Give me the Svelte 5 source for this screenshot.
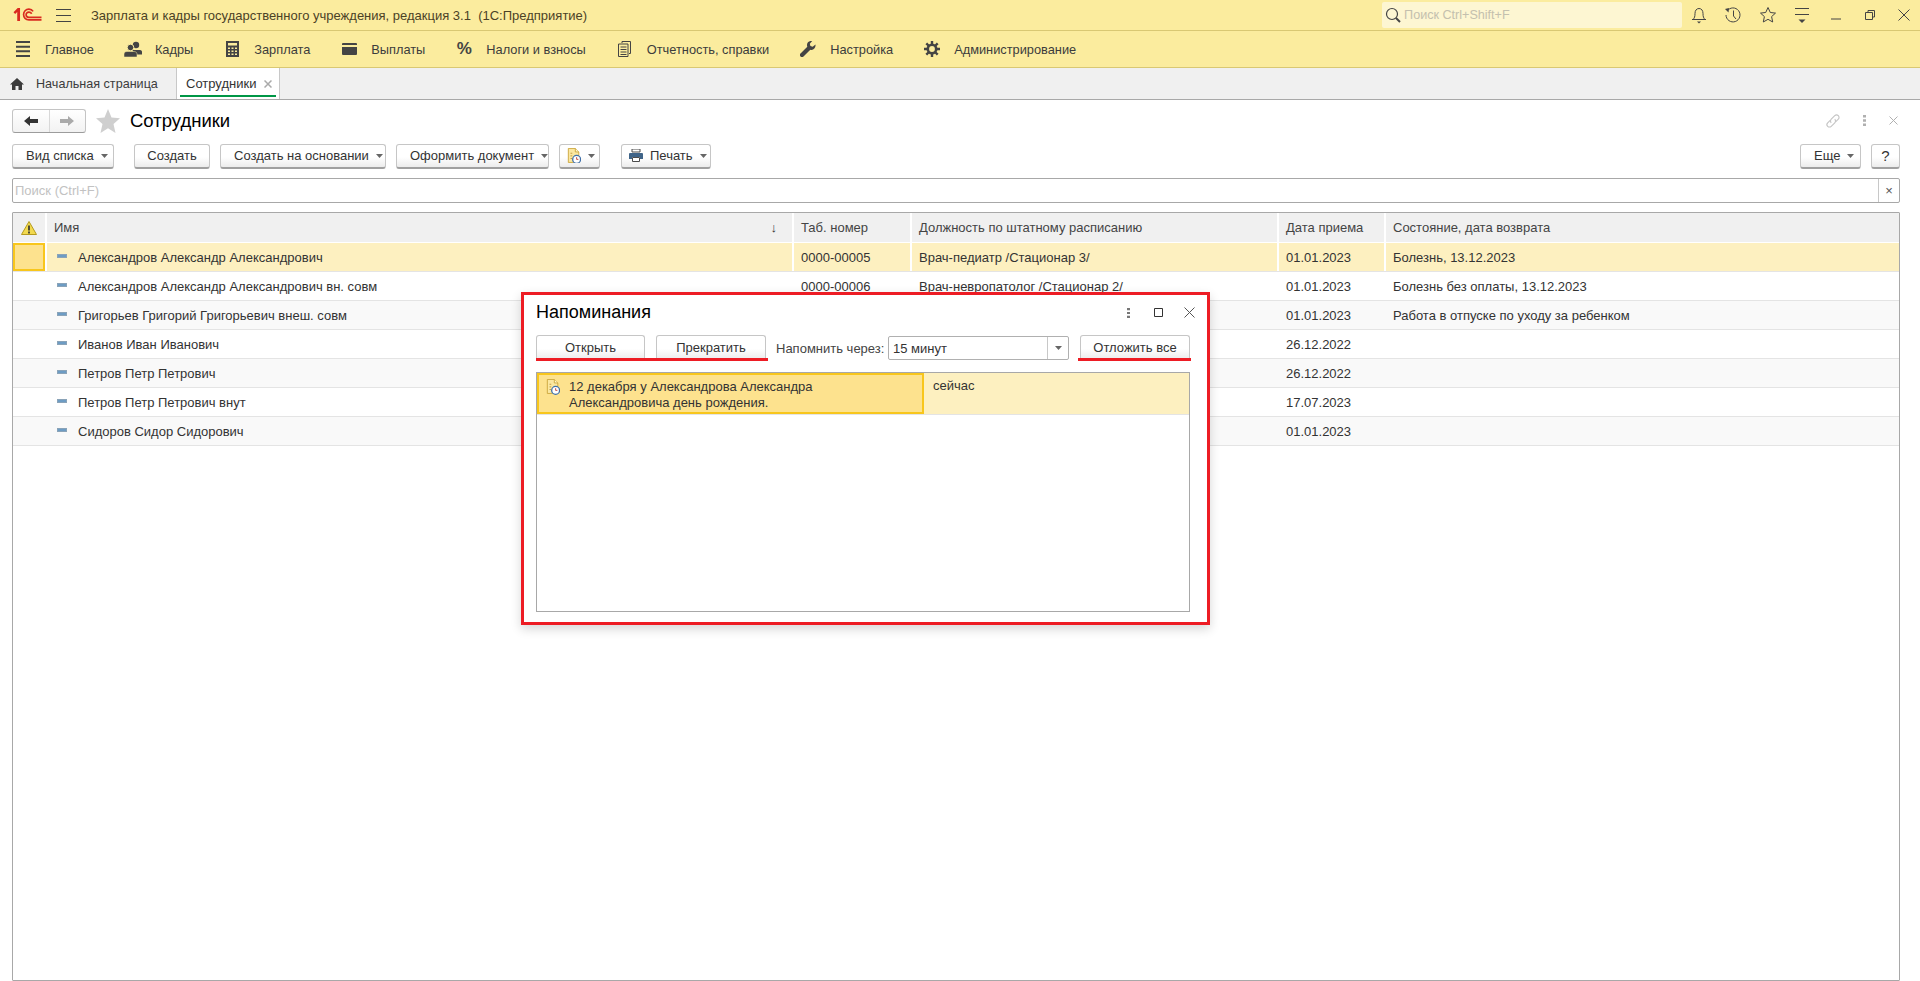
<script>
  const sections = [
    { label: 'Главное', icon: 'lines' },
    { label: 'Кадры', icon: 'people' },
    { label: 'Зарплата', icon: 'calc' },
    { label: 'Выплаты', icon: 'wallet' },
    { label: 'Налоги и взносы', icon: 'percent' },
    { label: 'Отчетность, справки', icon: 'docs' },
    { label: 'Настройка', icon: 'wrench' },
    { label: 'Администрирование', icon: 'gear' }
  ];

  const rows = [
    { name: 'Александров Александр Александрович', tab: '0000-00005', post: 'Врач-педиатр /Стационар 3/', date: '01.01.2023', state: 'Болезнь, 13.12.2023' },
    { name: 'Александров Александр Александрович вн. совм', tab: '0000-00006', post: 'Врач-невропатолог /Стационар 2/', date: '01.01.2023', state: 'Болезнь без оплаты, 13.12.2023' },
    { name: 'Григорьев Григорий Григорьевич внеш. совм', tab: '', post: '', date: '01.01.2023', state: 'Работа в отпуске по уходу за ребенком' },
    { name: 'Иванов Иван Иванович', tab: '', post: '', date: '26.12.2022', state: '' },
    { name: 'Петров Петр Петрович', tab: '', post: '', date: '26.12.2022', state: '' },
    { name: 'Петров Петр Петрович внут', tab: '', post: '', date: '17.07.2023', state: '' },
    { name: 'Сидоров Сидор Сидорович', tab: '', post: '', date: '01.01.2023', state: '' }
  ];
</script>

{#snippet caret()}
  <svg class="caret" viewBox="0 0 7 4" width="7" height="4"><path d="M0 0h7L3.500 4z" fill="#666" /></svg>
{/snippet}

{#snippet docClock(size)}
  <svg viewBox="0 0 16 18" width={size} height={size * 18 / 16}>
    <path d="M1.500.5h8l4 4v12h-12z" fill="#fbe7a0" stroke="#c9a437" />
    <path d="M9.500.5v4h4" fill="#fff6d0" stroke="#c9a437" />
    <path d="M4 6h2M4 9h2M4 12h2" stroke="#b8923a" />
    <circle cx="11" cy="13" r="4.500" fill="#fff" stroke="#3f6fa8" stroke-width="1.500" />
    <path d="M11 10.500V13h2" stroke="#c0392b" fill="none" />
  </svg>
{/snippet}

<div class="app">
  <header class="titlebar">
    <svg class="logo" viewBox="0 0 30 15" width="29" height="14">
      <path d="M0 4.500 4.500 0H7v14H4V4.200L1.800 6.400z" fill="#d92b20" />
      <path d="M21 3.600C20 2 18.400 1.300 16.500 1.300c-3.400 0-5.700 2.500-5.700 5.700s2.300 5.700 5.700 5.700H30" fill="none" stroke="#d92b20" stroke-width="1.800" />
      <path d="M19.500 6.200c-.6-1-1.700-1.700-3-1.700-1.700 0-3 1.200-3 2.800s1.300 2.700 3 2.700H30" fill="none" stroke="#d92b20" stroke-width="1.800" />
    </svg>
    <svg class="burger" viewBox="0 0 15 13" width="15" height="13"><path d="M0 .5h15M0 6.500h15M0 12.500h15" stroke="#444" /></svg>
    <span class="app-title">Зарплата и кадры государственного учреждения, редакция 3.1&nbsp; (1С:Предприятие)</span>
    <div class="global-search">
      <svg viewBox="0 0 16 16" width="16" height="16"><circle cx="7" cy="7" r="5.500" fill="none" stroke="#444" stroke-width="1.200" /><path d="M11 11l4 4" stroke="#444" stroke-width="2" /></svg>
      <span>Поиск Ctrl+Shift+F</span>
    </div>
    <div class="win-icons">
      <svg viewBox="0 0 16 18" width="16" height="18"><path d="M2 13.500c1.500-1.500 2-3 2-6 0-3 1.500-5 4-5s4 2 4 5c0 3 .5 4.500 2 6z M1 13.500h14" fill="none" stroke="#444" /><path d="M6 15.500h4L8 17.500z" fill="#444" /></svg>
      <svg viewBox="0 0 18 18" width="18" height="18"><path d="M3.200 5A7 7 0 1 1 2 9" fill="none" stroke="#444" /><path d="M1 3l4-1-.5 4.500z" fill="#444" /><path d="M9.500 4.500V10l2.500 3" fill="none" stroke="#444" /></svg>
      <svg viewBox="0 0 18 18" width="18" height="18"><path d="M9 1.500l2.300 5 5.200.6-3.900 3.500 1.100 5.400L9 13.300l-4.700 2.700 1.100-5.400L1.500 7.100l5.200-.6z" fill="none" stroke="#444" /></svg>
      <svg viewBox="0 0 16 16" width="16" height="16"><path d="M1 1.500h14M1 7.500h14" stroke="#444" /><path d="M4.500 12.500h7L8 16z" fill="#444" /></svg>
      <svg viewBox="0 0 10 10" width="10" height="10"><path d="M0 9h10" stroke="#444" stroke-width="1" /></svg>
      <svg viewBox="0 0 10 10" width="10" height="10"><path d="M3 2.500V.5h6.500v6.500H7.500M.5 2.500h7v7h-7z" fill="none" stroke="#444" /></svg>
      <svg viewBox="0 0 12 12" width="12" height="12"><path d="M.5.500l11 11M11.500.5l-11 11" stroke="#444" /></svg>
    </div>
  </header>

  <nav class="sections">
    {#each sections as s}
      <div class="section">
        <span class="section-icon">
          {#if s.icon === 'lines'}
            <svg viewBox="0 0 14 16" width="14" height="16"><path d="M0 1h14M0 5.700h14M0 10.300h14M0 15h14" stroke="#444" stroke-width="2" /></svg>
          {:else if s.icon === 'people'}
            <svg viewBox="0 0 18 16" width="18" height="16"><circle cx="12" cy="4" r="3.200" fill="#444" /><path d="M8 9h8c1.500 0 2 1 2 2v2.500h-6z" fill="#444" /><circle cx="6.500" cy="6.500" r="3.300" fill="#444" stroke="#fbec9e" /><path d="M0 16v-2.500c0-2 1-3 3-3h7c2 0 3 1 3 3V16z" fill="#444" stroke="#fbec9e" stroke-width=".5" /></svg>
          {:else if s.icon === 'calc'}
            <svg viewBox="0 0 13 16" width="13" height="16"><path fill-rule="evenodd" d="M0 0h13v16H0zM2 2v2.500h9V2zM2 6.500V8h2V6.500zM5.500 6.500V8h2V6.500zM9 6.500V8h2V6.500zM2 9.500V11h2V9.500zM5.500 9.500V11h2V9.500zM9 9.500V11h2V9.500zM2 12.500V14h2v-1.500zM5.500 12.500V14h2v-1.500zM9 12.500V14h2v-1.500z" fill="#444" /></svg>
          {:else if s.icon === 'wallet'}
            <svg viewBox="0 0 15 12" width="15" height="12"><path d="M1 0h13a1 1 0 0 1 1 1v1H0V1a1 1 0 0 1 1-1zM0 4h15v7a1 1 0 0 1-1 1H1a1 1 0 0 1-1-1z" fill="#444" /></svg>
          {:else if s.icon === 'percent'}
            <span class="pct">%</span>
          {:else if s.icon === 'docs'}
            <svg viewBox="0 0 13 16" width="13" height="16"><path d="M4 2V.5h8.500v12H11M.5 3h9.500v12.500H.5z" fill="none" stroke="#444" /><path d="M2.500 6h6M2.500 8.500h6M2.500 11h6M2.500 13.500h6" stroke="#444" /></svg>
          {:else if s.icon === 'wrench'}
            <svg viewBox="0 0 16 16" width="16" height="16"><path d="M15.500 3.500l-2.800 2.300-2.300-.7-.6-2.300L12.200 0C9.500-.5 7 1.300 7 4c0 .7.100 1.200.3 1.700L.5 12.500a2 2 0 0 0 3 3l6.800-6.800c2.800 1 5.700-1.500 5.200-5.200z" fill="#444" /></svg>
          {:else}
            <svg viewBox="0 0 16 16" width="16" height="16"><circle cx="8" cy="8" r="4.200" fill="none" stroke="#444" stroke-width="2.600" /><path d="M8 0v3M8 13v3M0 8h3M13 8h3M2.300 2.300l2.200 2.200M11.500 11.500l2.200 2.200M13.700 2.300l-2.200 2.200M4.500 11.500l-2.200 2.200" stroke="#444" stroke-width="2.400" /></svg>
          {/if}
        </span>
        <span>{s.label}</span>
      </div>
    {/each}
  </nav>

  <div class="tabs">
    <div class="tab home">
      <svg viewBox="0 0 14 12" width="14" height="12"><path d="M7 0l7 6.500h-2V12H8.500V8h-3v4H2V6.500H0z" fill="#3c3c3c" /></svg>
      <span>Начальная страница</span>
    </div>
    <div class="tab active">
      <span>Сотрудники</span>
      <svg viewBox="0 0 8 8" width="8" height="8"><path d="M.5.500l7 7M7.500.5l-7 7" stroke="#aaa" stroke-width="1.500" /></svg>
    </div>
  </div>

  <main class="page">
    <div class="form-head">
      <div class="nav-group">
        <span class="nav-btn">
          <svg viewBox="0 0 14 10" width="14" height="10"><path d="M0 5l6-5v3h8v4H6v3z" fill="#333" /></svg>
        </span>
        <span class="nav-btn">
          <svg viewBox="0 0 14 10" width="14" height="10"><path d="M14 5L8 0v3H0v4h8v3z" fill="#aaa" /></svg>
        </span>
      </div>
      <svg class="fav" viewBox="0 0 24 24" width="24" height="24"><path d="M12 0l3.500 8.500 8.500.7-6.500 5.800 2 9L12 19.200 4.500 24l2-9L0 9.200l8.500-.7z" fill="#cfcfcf" /></svg>
      <h1>Сотрудники</h1>
      <div class="head-icons">
        <svg viewBox="0 0 16 16" width="16" height="16">
          <g transform="rotate(-45 8 8)" fill="none" stroke="#c4c4c4" stroke-width="1.100">
            <path d="M6.500 5.500H3a2.500 2.500 0 0 0 0 5h5a2.500 2.500 0 0 0 2.500-2.500" />
            <path d="M5.500 8A2.500 2.500 0 0 1 8 5.500h5a2.500 2.500 0 0 1 0 5H9.500" />
          </g>
        </svg>
        <svg viewBox="0 0 3 11" width="3" height="11"><path d="M0 0h3v2.500H0zM0 4.200h3v2.500H0zM0 8.500h3V11H0z" fill="#b0b0b0" /></svg>
        <svg viewBox="0 0 9 9" width="9" height="9"><path d="M.5.500l8 8M8.500.5l-8 8" stroke="#b0b0b0" /></svg>
      </div>
    </div>

    <div class="toolbar">
      <button class="btn drop w-view">Вид списка {@render caret()}</button>
      <button class="btn w-create">Создать</button>
      <button class="btn drop w-base">Создать на основании {@render caret()}</button>
      <button class="btn drop w-doc">Оформить документ {@render caret()}</button>
      <button class="btn drop w-icon">{@render docClock(14)} {@render caret()}</button>
      <button class="btn drop w-print">
        <svg viewBox="0 0 14 13" width="14" height="13"><path d="M3 0h8v3H3z" fill="#fff" stroke="#4b4b4b" /><path d="M1 4h12a1 1 0 0 1 1 1v5h-3V8H3v2H0V5a1 1 0 0 1 1-1z" fill="#3f6488" /><path d="M3.500 8.500h7v4h-7z" fill="#fff" stroke="#4b4b4b" /></svg>
        Печать {@render caret()}
      </button>
      <span class="spacer"></span>
      <button class="btn drop w-more">Еще {@render caret()}</button>
      <button class="btn w-help">?</button>
    </div>

    <div class="search">
      <span class="placeholder">Поиск (Ctrl+F)</span>
      <span class="clear">×</span>
    </div>

    <div class="table">
      <div class="thead">
        <div class="cell c-flag">
          <svg viewBox="0 0 16 14" width="16" height="14"><path d="M8 .5l7.500 13H.5z" fill="#f2d94e" stroke="#b59a1e" stroke-linejoin="round" /><path d="M8 4.500v5M8 10.500v2" stroke="#333" stroke-width="1.700" /></svg>
        </div>
        <div class="cell c-name">Имя <span class="sort">↓</span></div>
        <div class="cell c-tab">Таб. номер</div>
        <div class="cell c-post">Должность по штатному расписанию</div>
        <div class="cell c-date">Дата приема</div>
        <div class="cell c-state">Состояние, дата возврата</div>
      </div>
      {#each rows as r, i}
        <div class="row" class:current={i === 0} class:alt={i % 2 === 0 && i > 0}>
          <div class="cell c-flag"><span class="flag-box"></span></div>
          <div class="cell c-name"><span class="dash"></span>{r.name}</div>
          <div class="cell c-tab">{r.tab}</div>
          <div class="cell c-post">{r.post}</div>
          <div class="cell c-date">{r.date}</div>
          <div class="cell c-state">{r.state}</div>
        </div>
      {/each}
    </div>

    <section class="dialog">
      <div class="dlg-head">
        <h2>Напоминания</h2>
        <div class="dlg-icons">
          <svg viewBox="0 0 3 10" width="3" height="10"><path d="M0 0h3v2.200H0zM0 3.900h3v2.200H0zM0 7.800h3V10H0z" fill="#777" /></svg>
          <svg viewBox="0 0 9 9" width="9" height="9"><path d="M.5.500h8v8h-8z" fill="none" stroke="#333" /></svg>
          <svg viewBox="0 0 11 11" width="11" height="11"><path d="M.5.500l10 10M10.500.5l-10 10" stroke="#555" /></svg>
        </div>
      </div>
      <div class="dlg-tools">
        <button class="btn dlg-btn w-open marked">Открыть</button>
        <button class="btn dlg-btn marked">Прекратить</button>
        <span class="remind-label">Напомнить через:</span>
        <div class="combo">
          <span class="combo-val">15 минут</span>
          <span class="combo-btn">{@render caret()}</span>
        </div>
        <button class="btn dlg-btn marked-end">Отложить все</button>
      </div>
      <div class="dlg-list">
        <div class="dlg-row">
          <div class="dlg-cell-main">
            {@render docClock(14)}
            <span>12 декабря у Александрова Александра<br />Александровича день рождения.</span>
          </div>
          <div class="dlg-cell-when">сейчас</div>
        </div>
      </div>
    </section>
  </main>
</div>

<style>
  :global(body) {
    margin: 0;
    background: #fff;
  }

  .app {
    position: relative;
    display: flex;
    flex-direction: column;
    width: 1920px;
    height: 981px;
    overflow: hidden;
    font-family: "Liberation Sans", Arial, sans-serif;
    font-size: 13px;
    color: #333;
  }

  .titlebar {
    display: flex;
    align-items: center;
    height: 30px;
    flex: none;
    padding-left: 13px;
    background: #fbec9e;
    border-bottom: 1px solid #d9c873;
  }
  .burger { margin-left: 14px; }
  .app-title { margin-left: 20px; color: #4b4226; font-size: 13px; }
  .global-search {
    display: flex;
    align-items: center;
    gap: 3px;
    box-sizing: border-box;
    width: 300px;
    height: 26px;
    margin-left: auto;
    padding-left: 3px;
    background: #fdf6d2;
    border-radius: 2px;
    color: #c4c0ae;
    font-size: 12.600px;
  }
  .win-icons {
    display: grid;
    grid-template-columns: repeat(7, 34.200px);
    justify-items: center;
    align-items: center;
    margin-right: -1.400px;
  }

  .sections {
    display: flex;
    align-items: center;
    flex: none;
    gap: 27px;
    height: 36px;
    padding-left: 11px;
    background: #fbec9e;
    border-bottom: 1px solid #d9c873;
    color: #3c3c3c;
    font-size: 12.800px;
  }
  .section { display: flex; align-items: center; gap: 10px; }
  .section-icon { display: flex; align-items: center; justify-content: center; width: 24px; }
  .pct { font-size: 17px; font-weight: 700; color: #444; }

  .tabs {
    display: flex;
    flex: none;
    height: 31px;
    background: #f0f0f0;
    border-bottom: 1px solid #a8a8a8;
  }
  .tab { display: flex; align-items: center; box-sizing: border-box; }
  .home { width: 176px; padding-left: 10px; gap: 12px; color: #3c3c3c; font-size: 12.600px; }
  .active {
    position: relative;
    width: 104px;
    padding-left: 9px;
    gap: 8px;
    background: #fff;
    border-left: 1px solid #c8c8c8;
    border-right: 1px solid #c8c8c8;
  }
  .active::after {
    content: "";
    position: absolute;
    left: 3px;
    right: 3px;
    bottom: 2px;
    height: 2px;
    background: #009646;
  }

  .page {
    position: relative;
    flex: 1;
    display: flex;
    flex-direction: column;
    padding: 8px 20px 0 12px;
    min-height: 0;
  }

  .form-head { display: flex; align-items: center; height: 25px; }
  .nav-group {
    display: flex;
    width: 74px;
    height: 24px;
    box-sizing: border-box;
    border: 1px solid #c4c4c4;
    border-bottom-color: #9c9c9c;
    border-radius: 3px;
    background: linear-gradient(#fff, #f2f2f2);
  }
  .nav-btn { flex: 1; display: flex; align-items: center; justify-content: center; }
  .nav-btn + .nav-btn { border-left: 1px solid #d8d8d8; }
  .fav { margin-left: 10px; }
  h1 { margin: 0 0 0 10px; font-size: 18.500px; font-weight: 400; color: #000; }
  .head-icons {
    display: flex;
    align-items: center;
    margin-left: auto;
    padding-right: 2px;
  }
  .head-icons svg:nth-child(2) { margin: 0 23px 0 22px; }

  .toolbar { display: flex; align-items: center; gap: 10px; height: 26px; margin-top: 10px; }
  .spacer { flex: 1; }

  .btn {
    display: inline-flex;
    align-items: center;
    justify-content: center;
    gap: 5px;
    box-sizing: border-box;
    height: 25px;
    padding: 0;
    border: 1px solid #c6c6c6;
    border-bottom: 2px solid #a0a0a0;
    border-radius: 3px;
    background: linear-gradient(#fff 55%, #ececec);
    font: inherit;
    color: #333;
    white-space: nowrap;
  }
  .btn.drop { justify-content: flex-start; gap: 7px; padding-left: 13px; }
  .w-view { width: 102px; margin-right: 10px; }
  .w-create { width: 76px; }
  .w-base { width: 166px; }
  .w-doc { width: 153px; }
  .btn.w-icon { width: 41px; margin-right: 11px; padding-left: 7px; }
  .btn.w-print { width: 90px; padding-left: 7px; }
  .w-more { width: 61px; }
  .w-help { width: 29px; font-size: 15px; }

  .search {
    display: flex;
    align-items: center;
    justify-content: space-between;
    box-sizing: border-box;
    height: 25px;
    margin-top: 9px;
    padding-left: 2px;
    border: 1px solid #a8a8a8;
    border-radius: 2px;
    color: #c2c2c2;
  }
  .clear {
    display: flex;
    align-items: center;
    justify-content: center;
    width: 20px;
    height: 100%;
    border-left: 1px solid #c8c8c8;
    color: #555;
  }

  .table {
    flex: 1;
    box-sizing: border-box;
    margin-top: 9px;
    border: 1px solid #a8a8a8;
    border-radius: 1px;
    min-height: 0;
  }
  .thead, .row {
    display: grid;
    grid-template-columns: 32px 747px 118px 367px 107px 1fr;
  }
  .thead { height: 29px; background: #f0f0f0; border-bottom: 1px solid #fff; }
  .row { height: 28px; border-bottom: 1px solid #e4e4e4; }
  .cell {
    display: flex;
    align-items: center;
    box-sizing: border-box;
    padding-left: 7px;
    white-space: nowrap;
    overflow: hidden;
    border-left: 2px solid transparent;
    min-width: 0;
  }
  .thead .cell { border-left-color: #fff; color: #444; padding-bottom: 1px; }
  .thead .c-flag { border-left: 0; justify-content: center; padding: 0; }
  .thead .c-name { justify-content: space-between; padding-right: 15px; }
  .sort { font-size: 13px; color: #333; }
  .row .c-flag { padding: 0; border-left: 0; }
  .row.alt { background: #f9f9f9; }
  .row.current { background: #fdf0c0; }
  .row.current .cell { border-left-color: #fff; }
  .row.current .c-flag { border-left: 0; }
  .row.current .flag-box {
    width: 100%;
    height: 100%;
    box-sizing: border-box;
    background: #fde28e;
    border: 2px solid #f8c61c;
  }
  .row .c-name { padding-left: 10px; }
  .dash {
    flex: none;
    width: 10px;
    height: 4px;
    margin-right: 11px;
    margin-bottom: 3px;
    background: #6d9cc4;
    border: 1px solid #8aa3b8;
    box-sizing: border-box;
  }

  .dialog {
    position: absolute;
    left: 521px;
    top: 192px;
    width: 689px;
    height: 333px;
    box-sizing: border-box;
    padding: 0 17px 0 12px;
    display: flex;
    flex-direction: column;
    background: #fff;
    border: 3px solid #ed1c24;
    box-shadow: 0 4px 10px rgba(0, 0, 0, 0.16);
  }
  .dlg-head { display: flex; align-items: center; justify-content: space-between; box-sizing: border-box; height: 40px; padding-bottom: 5px; flex: none; }
  h2 { margin: 0; font-size: 18px; font-weight: 400; color: #000; }
  .dlg-icons { display: flex; align-items: center; margin-right: -5px; }
  .dlg-icons svg:nth-child(2) { margin: 0 21px 0 24px; }
  .dlg-tools { display: flex; align-items: center; height: 26px; flex: none; }
  .dlg-btn { position: relative; width: 110px; height: 26px; flex: none; }
  .w-open { width: 109px; margin-right: 11px; }
  .dlg-btn.marked::after, .dlg-btn.marked-end::after {
    content: "";
    position: absolute;
    left: -1px;
    right: -1px;
    bottom: -2px;
    height: 3px;
    background: #ed1c24;
  }
  .dlg-btn.marked + .dlg-btn.marked::after { left: -12px; right: -3px; }
  .dlg-btn.marked-end { margin-left: 11px; }
  .dlg-btn.marked-end::after { left: -3px; right: -2px; }
  .remind-label { flex: none; box-sizing: border-box; width: 122px; padding-left: 10px; color: #444; white-space: nowrap; }
  .combo {
    display: flex;
    align-items: center;
    box-sizing: border-box;
    width: 181px;
    height: 24px;
    flex: none;
    border: 1px solid #b0b0b0;
    border-radius: 2px;
  }
  .combo-val { flex: 1; padding-left: 4px; }
  .combo-btn {
    display: flex;
    align-items: center;
    justify-content: center;
    width: 20px;
    height: 100%;
    border-left: 1px solid #c8c8c8;
  }
  .dlg-list {
    flex: 1;
    margin: 11px 0 10px;
    border: 1px solid #a8a8a8;
    min-height: 0;
  }
  .dlg-row {
    display: flex;
    height: 41px;
    background: #fdf0c0;
    border-bottom: 1px solid #e4e4e4;
  }
  .dlg-cell-main {
    display: flex;
    gap: 9px;
    box-sizing: border-box;
    width: 387px;
    padding: 4px 0 0 7px;
    background: #fde28e;
    border: 2px solid #f8c61c;
    line-height: 16px;
  }
  .dlg-cell-when { padding: 5px 0 0 9px; line-height: 16px; }
</style>
